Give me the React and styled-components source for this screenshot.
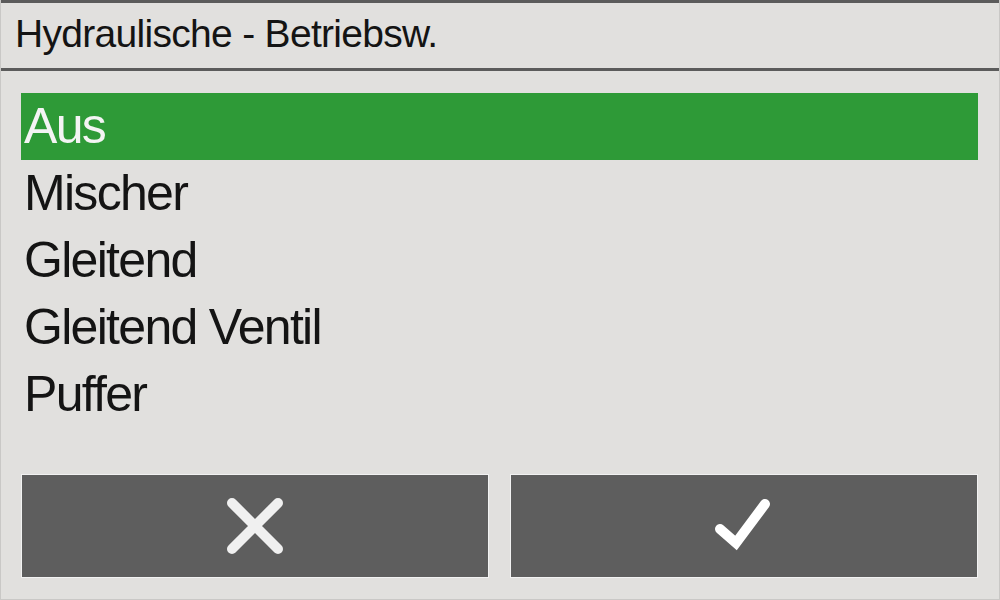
import React from 'react'
import styled, { createGlobalStyle } from 'styled-components'

const GlobalStyle = createGlobalStyle`
  html, body {
    margin: 0;
    padding: 0;
    background: #e1e0de;
  }
  * {
    box-sizing: border-box;
  }
`

const ScreenUI = styled('div')`
  width: 1000px;
  height: 600px;
  display: flex;
  flex-direction: column;
  background: #e1e0de;
  font-family: 'Liberation Sans', Arial, sans-serif;
  color: #141414;
  border-left: 1px solid #c9c8c6;
  border-right: 1px solid #c9c8c6;
  border-bottom: 1px solid #c9c8c6;
  overflow: hidden;
`

const HeaderUI = styled('div')`
  height: 71px;
  flex: none;
  display: flex;
  align-items: center;
  padding: 0 0 4px 14px;
  border-top: 3px solid #5b5b5b;
  border-bottom: 3px solid #5b5b5b;
  font-size: 39px;
  letter-spacing: -0.7px;
`

const ListUI = styled('ul')`
  list-style: none;
  margin: 0;
  padding: 22px 21px 0 20px;
  display: flex;
  flex-direction: column;
  flex: 1;
`

const RowUI = styled('li')`
  height: 67px;
  display: flex;
  align-items: center;
  padding: 0 0 2px 3px;
  font-size: 50px;
  letter-spacing: -1.7px;
  color: ${({ selected }) => (selected ? '#f4f4f4' : '#141414')};
  background: ${({ selected }) => (selected ? '#2e9a37' : 'transparent')};
`

const ButtonBarUI = styled('div')`
  flex: none;
  display: grid;
  grid-template-columns: 1fr 1fr;
  gap: 21px;
  padding: 0 21px 21px 20px;
`

const ButtonUI = styled('button')`
  height: 104px;
  display: flex;
  align-items: center;
  justify-content: center;
  background: #5e5e5e;
  border: 1px solid #f2f2f2;
  border-radius: 0;
  padding: 0;
  color: #f0f0f0;
  cursor: pointer;
`

const CrossIcon = () => (
  <svg width="58" height="58" viewBox="0 0 58 58">
    <path
      d="M6 6 L52 52 M52 6 L6 52"
      stroke="#f0f0f0"
      strokeWidth="10"
      strokeLinecap="round"
      fill="none"
    />
  </svg>
)

const CheckIcon = () => (
  <svg width="58" height="58" viewBox="0 0 58 58">
    <path
      d="M5 32 L21 46 L50 7"
      stroke="#ffffff"
      strokeWidth="10"
      strokeLinecap="round"
      strokeLinejoin="miter"
      fill="none"
    />
  </svg>
)

const options = ['Aus', 'Mischer', 'Gleitend', 'Gleitend Ventil', 'Puffer']

export default function App() {
  const selected = 0
  return (
    <>
      <GlobalStyle />
      <ScreenUI>
        <HeaderUI>Hydraulische - Betriebsw.</HeaderUI>
        <ListUI>
          {options.map((label, i) => (
            <RowUI key={label} selected={i === selected}>
              {label}
            </RowUI>
          ))}
        </ListUI>
        <ButtonBarUI>
          <ButtonUI aria-label="Abbrechen">
            <CrossIcon />
          </ButtonUI>
          <ButtonUI aria-label="Bestätigen">
            <CheckIcon />
          </ButtonUI>
        </ButtonBarUI>
      </ScreenUI>
    </>
  )
}
